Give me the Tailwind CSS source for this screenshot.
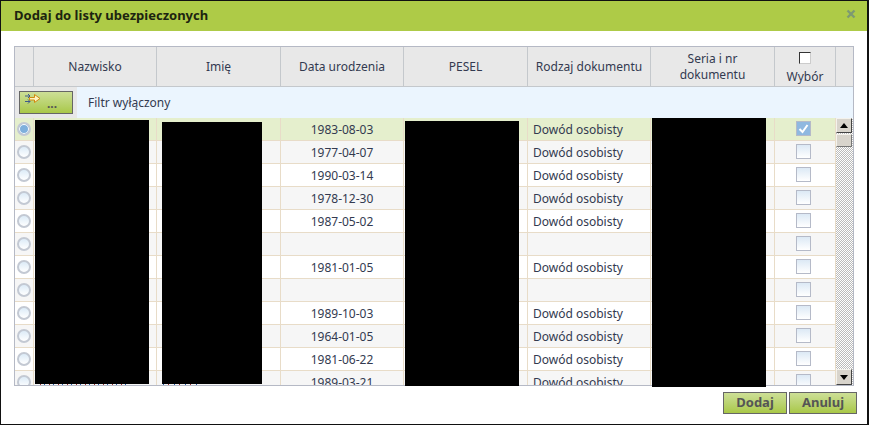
<!DOCTYPE html>
<html lang="pl">
<head>
    <meta charset="UTF-8">
    <title>Dodaj do listy ubezpieczonych</title>
    <script src="https://cdn.jsdelivr.net/npm/@tailwindcss/browser@4"></script>
</head>
<body class="bg-white font-['Noto_Sans',sans-serif] text-[12px] text-[#333a50]">
<div class="relative w-[869px] h-[425px] overflow-hidden bg-white border-t border-l border-b border-r-2 border-[#111] flex flex-col">
    <!-- title bar -->
    <div class="h-[30px] shrink-0 bg-[#aecb47] flex items-center justify-between pl-[13px] pr-[11px]">
        <span class="text-[13px] font-bold text-[#1c2410]">Dodaj do listy ubezpieczonych</span>
        <svg width="10" height="10" viewBox="0 0 10 10" class="-mt-[5px]"><path d="M1.500 1.500l7 7M8.500 1.500l-7 7" stroke="#7d9a72" stroke-width="2.400"/></svg>
    </div>

    <!-- table -->
    <div class="mt-[15px] ml-[13px] w-[840px] h-[340px] border border-[#b5b9c5] flex flex-col relative">
        <div class="grid grid-cols-[19px_123px_124px_123px_124px_123px_124px_61px_17px] h-[40px] shrink-0 bg-[#e8e8e8] text-center border-b border-[#c4c8cc] leading-[16px]">
            <div class="border-r border-[#c4c8cc]"></div>
            <div class="border-r border-[#c4c8cc] flex items-center justify-center pt-px">Nazwisko</div>
            <div class="border-r border-[#c4c8cc] flex items-center justify-center pt-px">Imię</div>
            <div class="border-r border-[#c4c8cc] flex items-center justify-center pt-px">Data urodzenia</div>
            <div class="border-r border-[#c4c8cc] flex items-center justify-center pt-px">PESEL</div>
            <div class="border-r border-[#c4c8cc] flex items-center justify-center pt-px">Rodzaj dokumentu</div>
            <div class="border-r border-[#c4c8cc] flex items-center justify-center">Seria i nr<br>dokumentu</div>
            <div class="border-r border-[#c4c8cc] flex flex-col items-center pt-[5px] gap-[5px]">
                <span class="w-[12px] h-[12px] bg-white border border-[#333] border-r-[#ccc] border-b-[#ccc]"></span>
                <span>Wybór</span>
            </div>
            <div></div>
        </div>
        <div class="h-[31px] shrink-0 flex bg-[#ebf5fe]">
            <div class="w-[62px] bg-[#e8e8e8] pl-[4px] pt-[4px]">
                <button class="w-[54px] h-[23px] border border-[#666] bg-gradient-to-b from-[#cddf96] to-[#a9c846] flex pl-[5px] pt-[1px] text-[#555] font-bold relative">
                    <svg width="16" height="12" viewBox="0 0 16 12" fill="none">
                        <path d="M0 3h5M0 8.500h5" stroke="#3f5a8a" stroke-width="1"/>
                        <path d="M3 1l2 2-2 2M3 6.500l2 2-2 2" stroke="#3f5a8a" stroke-width="1"/>
                        <path d="M4.500 4.500h5V1.500L15 5.500l-5.500 4V7h-5z" fill="#fff3c0" stroke="#d08a10" stroke-width="1"/>
                    </svg>
                    <span class="absolute left-[27px] top-[3px]">...</span>
                </button>
            </div>
            <div class="pl-[11px] pt-[8px] leading-[15px]">Filtr wyłączony</div>
        </div>
        <div class="flex h-[267px] overflow-hidden">
            <div id="rows" class="w-[821px] shrink-0"></div>
            <!-- scrollbar -->
            <div class="w-[17px] flex flex-col bg-[repeating-conic-gradient(#bbb_0_25%,#fff_0_50%)] bg-[length:2px_2px]">
                <div class="h-[15px] w-[16px] bg-[#d8d4cc] border border-[#f4f2ec] border-r-[#444] border-b-[#444] flex items-center justify-center">
                    <svg width="8" height="5" viewBox="0 0 8 5"><path d="M4 0l4 5H0z" fill="#000"/></svg>
                </div>
                <div class="mt-[1px] h-[13px] w-[16px] bg-[#d8d4cc] border border-[#f4f2ec] border-r-[#777] border-b-[#777]"></div>
                <div class="mt-auto h-[16px] w-[16px] bg-[#d8d4cc] border border-[#f4f2ec] border-r-[#444] border-b-[#444] flex items-center justify-center">
                    <svg width="8" height="5" viewBox="0 0 8 5"><path d="M4 5L8 0H0z" fill="#000"/></svg>
                </div>
            </div>
        </div>
        <!-- redacted columns -->
        <div class="absolute left-[20px] top-[73px] w-[114px] h-[264px] bg-black"></div>
        <div class="absolute left-[147px] top-[75px] w-[100px] h-[262px] bg-black"></div>
        <div class="absolute left-[390px] top-[74px] w-[114px] h-[265px] bg-black"></div>
        <div class="absolute left-[637px] top-[71px] w-[114px] h-[269px] bg-black"></div>
        <!-- clipped tails of the names under the redaction -->
        <div class="absolute left-[25px] top-[337px] w-[88px] h-px bg-[repeating-linear-gradient(90deg,#a03030_0_1px,transparent_1px_4px,#2a60b0_4px_5px,transparent_5px_9px)]"></div>
        <div class="absolute left-[148px] top-[337px] w-[34px] h-px bg-[repeating-linear-gradient(90deg,#2a60b0_0_1px,transparent_1px_5px,#a03030_5px_6px,transparent_6px_11px)]"></div>
    </div>

    <!-- buttons -->
    <div class="flex justify-end gap-[2px] mt-[6px] mr-[10px]">
        <button class="w-[64px] h-[22px] border border-[#666] bg-gradient-to-b from-[#cddf96] to-[#a9c846] text-[13px] font-bold text-[#555]">Dodaj</button>
        <button class="w-[68px] h-[22px] border border-[#666] bg-gradient-to-b from-[#cddf96] to-[#a9c846] text-[13px] font-bold text-[#555]">Anuluj</button>
    </div>
</div>

<script>
    const dates = ['1983-08-03','1977-04-07','1990-03-14','1978-12-30','1987-05-02','','1981-01-05','','1989-10-03','1964-01-05','1981-06-22','1989-03-21'];
    const cell = 'border-r border-[#e8dcc8] flex items-center';
    document.getElementById('rows').innerHTML = dates.map((d, i) => {
        const bg = i === 0 ? 'bg-[#e5efcd]' : (i % 2 ? 'bg-[#f6f6f6]' : 'bg-white');
        const radio = i === 0
            ? '<span class="block w-[14px] h-[14px] rounded-full border-2 border-[#c3c9d3] bg-[#7fb0dc] shadow-[inset_0_0_0_1px_#fff]"></span>'
            : '<span class="block w-[14px] h-[14px] rounded-full border-2 border-[#c3c9d3] bg-gradient-to-b from-[#dcebf7] to-white"></span>';
        const check = i === 0
            ? '<span class="w-[15px] h-[15px] border border-[#b5bac8] bg-[#8fb8e0] flex items-center justify-center"><svg width="11" height="10" viewBox="0 0 11 10"><path d="M1.500 5l3 3 5-7" fill="none" stroke="#fff" stroke-width="2"/></svg></span>'
            : '<span class="w-[15px] h-[15px] border border-[#b5bac8] bg-gradient-to-b from-[#dce9f5] to-white"></span>';
        return `<div class="grid grid-cols-[19px_123px_124px_123px_124px_123px_124px_61px] h-[23px] border-b border-[#e8dcc8] ${bg}">
            <div class="${cell} pl-[2px]">${radio}</div>
            <div class="${cell}"></div>
            <div class="${cell}"></div>
            <div class="${cell} justify-center pt-px">${d}</div>
            <div class="${cell}"></div>
            <div class="${cell} pl-[5px] pt-px">${d ? 'Dowód osobisty' : ''}</div>
            <div class="${cell}"></div>
            <div class="${cell} pl-[21px] -mt-px">${check}</div>
        </div>`;
    }).join('');
</script>
</body>
</html>
